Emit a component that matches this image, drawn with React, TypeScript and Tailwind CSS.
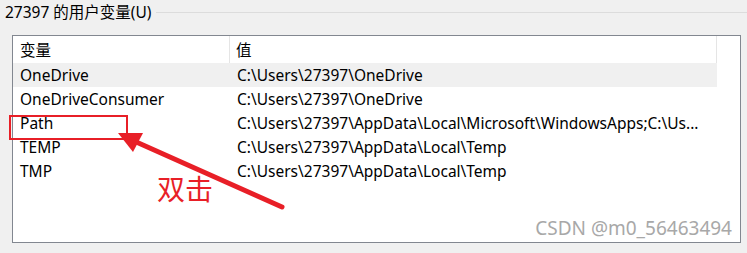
const rows = [
  { name: "OneDrive", value: "C:\\Users\\27397\\OneDrive", hover: true },
  { name: "OneDriveConsumer", value: "C:\\Users\\27397\\OneDrive" },
  { name: "Path", value: "C:\\Users\\27397\\AppData\\Local\\Microsoft\\WindowsApps;C:\\Us..." },
  { name: "TEMP", value: "C:\\Users\\27397\\AppData\\Local\\Temp" },
  { name: "TMP", value: "C:\\Users\\27397\\AppData\\Local\\Temp" },
];

export default function App() {
  return (
    <div
      className="relative w-[747px] h-[253px] overflow-hidden bg-[#f0f0f0] text-black text-[15.5px]"
      style={{ fontFamily: '"Noto Sans", "Noto Sans CJK SC", sans-serif' }}
    >
      {/* group box title */}
      <div className="flex items-center h-[24px] pt-px">
        <span className="pl-[5px] pr-[4px] leading-none">27397 的用户变量(U)</span>
        <div className="flex-1 h-px bg-[#dcdcdc]" />
      </div>

      {/* list view */}
      <div className="ml-[12px] mt-[11px] w-[729px] h-[208px] border border-[#828790] bg-white">
        <div className="flex w-[704px] h-[27px] border-r border-[#e5e5e5]">
          <div className="w-[217px] pl-[7px] pt-[2px] flex items-center border-r border-[#e5e5e5]">变量</div>
          <div className="flex-1 pl-[6px] pt-[2px] flex items-center">值</div>
        </div>
        {rows.map((r) => (
          <div key={r.name} className={`flex w-[704px] h-[24px] pt-[2px] items-center ${r.hover ? "bg-[#f0f0f0]" : ""}`}>
            <div className="w-[218px] pl-[7px] whitespace-nowrap">{r.name}</div>
            <div className="flex-1 pl-[6px] whitespace-nowrap overflow-hidden">{r.value}</div>
          </div>
        ))}
      </div>

      {/* annotation overlay */}
      <div className="absolute left-[9px] top-[115px] w-[119px] h-[25px] border-2 border-[#e81f27]" />
      <svg className="absolute left-0 top-0" width="747" height="253" viewBox="0 0 747 253">
        <line x1="134" y1="141" x2="282" y2="207" stroke="#e81f27" strokeWidth="5" strokeLinecap="round" />
        <polygon points="118,133 143,133 133,152" fill="#e81f27" />
      </svg>
      <div
        className="absolute left-[157px] top-[174px] text-[28px] leading-none text-[#e81f27]"
        style={{ fontFamily: '"Noto Sans CJK SC", sans-serif' }}
      >
        双击
      </div>
      <div className="absolute right-[15px] top-[219px] text-[19px] leading-none text-[#a8a8a8] whitespace-nowrap">
        CSDN @m0_56463494
      </div>
    </div>
  );
}
